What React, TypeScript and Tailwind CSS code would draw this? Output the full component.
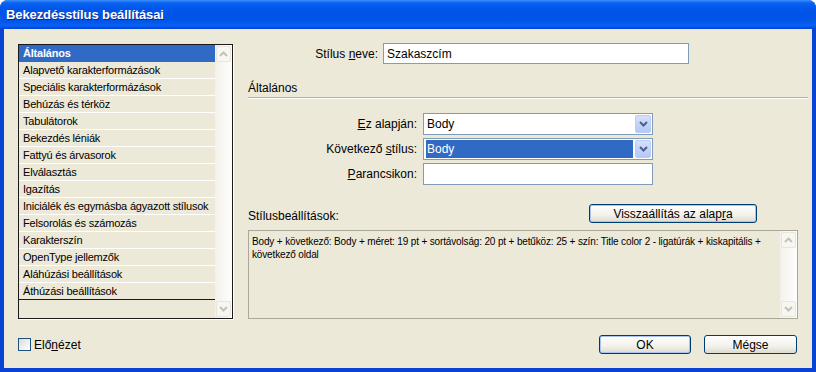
import React from 'react';

const font = "font-['Tahoma','Liberation_Sans','Arial',sans-serif]";

const listItems = [
  'Általános',
  'Alapvető karakterformázások',
  'Speciális karakterformázások',
  'Behúzás és térköz',
  'Tabulátorok',
  'Bekezdés léniák',
  'Fattyú és árvasorok',
  'Elválasztás',
  'Igazítás',
  'Iniciálék és egymásba ágyazott stílusok',
  'Felsorolás és számozás',
  'Karakterszín',
  'OpenType jellemzők',
  'Aláhúzási beállítások',
  'Áthúzási beállítások',
];

// small chevron used by scroll buttons and dropdowns
const Chevron = ({ up = false, color = '#c4c2b8' }: { up?: boolean; color?: string }) => (
  <svg width="9" height="6" viewBox="0 0 9 6">
    <path
      d={up ? 'M1 5 L4.5 1.5 L8 5' : 'M1 1 L4.5 4.5 L8 1'}
      fill="none"
      stroke={color}
      strokeWidth="2"
    />
  </svg>
);

const ScrollBar = () => (
  <div className="w-[17px] h-full flex flex-col justify-between bg-[linear-gradient(to_right,#f3f1ea,#fefefe)]">
    <div className="h-[16px] m-[1px] rounded-[2px] border border-[#e8e6dc] bg-[#f7f6f1] flex items-center justify-center">
      <Chevron up />
    </div>
    <div className="h-[16px] m-[1px] rounded-[2px] border border-[#e8e6dc] bg-[#f7f6f1] flex items-center justify-center">
      <Chevron />
    </div>
  </div>
);

const DropButton = () => (
  <div className="w-[16px] h-[18px] my-[1px] mr-[1px] rounded-[2px] border border-[#b9cdf6] bg-[linear-gradient(to_bottom,#d4e0fd,#b4c8f7)] flex items-center justify-center">
    <Chevron color="#4d6185" />
  </div>
);

const XpButton = ({ label, className = '', def = false }: { label: React.ReactNode; className?: string; def?: boolean }) => (
  <button
    className={`h-[19px] rounded-[3px] border border-[#003c74] bg-[linear-gradient(to_bottom,#ffffff,#f2f1ea_60%,#dedbcf)] text-[12px] font-normal leading-none text-black whitespace-nowrap ${
      def ? 'shadow-[inset_0_0_0_1px_#a8c4ef]' : ''
    } ${className}`}
  >
    {label}
  </button>
);

export default function App() {
  return (
    <div className={`w-[816px] h-[372px] flex flex-col bg-[#0843d6] rounded-t-[8px] overflow-hidden ${font}`}>
      {/* Title bar */}
      <div className="h-[29px] flex items-center pl-[6px] bg-[linear-gradient(to_bottom,#3d8ffe_0%,#0a63f0_10%,#0055ea_30%,#0054e6_70%,#0760f6_88%,#0043cf_100%)]">
        <span className="text-white text-[13px] font-bold tracking-[-0.1px] [text-shadow:1px_1px_0_#0a2a8a]">
          Bekezdésstílus beállításai
        </span>
      </div>

      {/* Body */}
      <div className="flex-1 mx-[4px] mb-[4px] bg-[#ece9d8] flex flex-col text-black">
        <div className="flex pt-[14px] pl-[14px]">
          {/* Category list */}
          <div className="mt-[1px] w-[215px] h-[275px] border border-[#1a1a1a] shadow-[1px_1px_0_#ffffff] flex">
            <div className="flex-1 flex flex-col min-w-0">
              {listItems.map((item, i) => (
                <div
                  key={item}
                  className={`h-[17px] flex items-center pl-[4px] text-[11px] tracking-[-0.2px] whitespace-nowrap overflow-hidden border-b ${
                    i === 0
                      ? 'bg-[#316ac5] text-white font-bold border-[#316ac5]'
                      : 'border-white'
                  }`}
                >
                  {item}
                </div>
              ))}
              <div className="flex-1 border-t border-[#1a1a1a] -mt-[1px]" />
            </div>
            <ScrollBar />
          </div>

          {/* Right panel */}
          <div className="ml-[15px] w-[560px] flex flex-col text-[12px]">
            <div className="h-[21px] flex items-center">
              <div className="w-[130px] text-right">
                Stílus <span className="underline">n</span>eve:
              </div>
              <div className="ml-[5px] w-[306px] h-[21px] border border-[#7f9db9] bg-white flex items-center pl-[3px]">
                Szakaszcím
              </div>
            </div>

            <div className="mt-[17px] pb-[2px] border-b border-[#a9b0ba] shadow-[0_1px_0_#ffffff] h-[17px] leading-[14px]">
              Általános
            </div>

            <div className="mt-[15px] flex flex-col gap-[3px]">
              <div className="h-[22px] flex items-center">
                <div className="w-[169px] text-right">
                  <span className="underline">E</span>z alapján:
                </div>
                <div className="ml-[6px] w-[230px] h-[22px] border border-[#7f9db9] bg-white flex items-center justify-between">
                  <span className="pl-[3px]">Body</span>
                  <DropButton />
                </div>
              </div>
              <div className="h-[22px] flex items-center">
                <div className="w-[169px] text-right">
                  Következő <span className="underline">s</span>tílus:
                </div>
                <div className="ml-[6px] w-[230px] h-[22px] border border-[#7f9db9] bg-white flex items-center justify-between">
                  <span className="ml-[2px] w-[207px] h-[18px] bg-[#316ac5] text-white pl-[1px] flex items-center">Body</span>
                  <DropButton />
                </div>
              </div>
              <div className="h-[22px] flex items-center">
                <div className="w-[169px] text-right">
                  <span className="underline">P</span>arancsikon:
                </div>
                <div className="ml-[6px] w-[230px] h-[22px] border border-[#7f9db9] bg-white" />
              </div>
            </div>

            <div className="mt-[19px] h-[19px] flex items-end justify-between w-[509px]">
              <span className="leading-[14px]">Stílusbeállítások:</span>
              <XpButton
                def
                className="w-[168px]"
                label={
                  <>
                    Visszaállítás az alap<span className="underline">r</span>a
                  </>
                }
              />
            </div>

            <div className="mt-[7px] w-[550px] h-[89px] border border-[#aca899] flex">
              <div className="flex-1 min-w-0 px-[3px] pt-[4px] text-[10px] leading-[13px] tracking-[-0.15px] whitespace-nowrap overflow-hidden">
                Body + következő: Body + méret: 19 pt + sortávolság: 20 pt + betűköz: 25 + szín: Title color 2 - ligatúrák + kiskapitális +
                <br />
                következő oldal
              </div>
              <ScrollBar />
            </div>
          </div>
        </div>

        {/* Bottom row */}
        <div className="mt-[16px] h-[19px] flex items-center pl-[14px] pr-[15px] text-[12px]">
          <div className="w-[13px] h-[13px] border border-[#1c5180] bg-[linear-gradient(135deg,#dcdbd5,#ffffff)]" />
          <span className="ml-[3px]">
            Elő<span className="underline">n</span>ézet
          </span>
          <div className="ml-auto flex gap-[13px]">
            <XpButton def label="OK" className="w-[92px]" />
            <XpButton label="Mégse" className="w-[93px]" />
          </div>
        </div>
      </div>
    </div>
  );
}
